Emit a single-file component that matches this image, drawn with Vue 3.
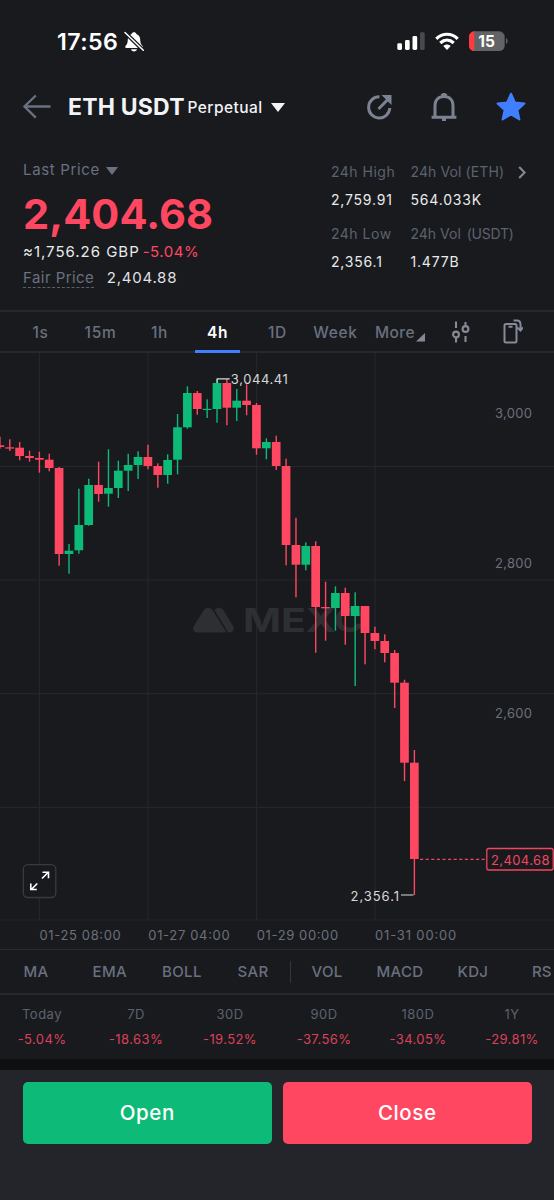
<script setup>
const UP = '#0eba78'
const DOWN = '#ff4761'

// [direction, high, body top, body bottom, low] in chart coordinates
const rows = [
  [0, 436.7, 445.3, 447, 448.7], [0, 439.3, 447.3, 448.6, 451], [0, 442, 447.7, 456, 460.3],
  [0, 450.7, 456, 458, 461.7], [0, 451.7, 458, 459.7, 472.7], [0, 453.7, 459.7, 468, 471.3],
  [0, 467, 468, 554, 565.7], [1, 544, 550.7, 554, 573.7], [1, 488.7, 525, 550.3, 553.7],
  [1, 478.7, 485, 525, 525.7], [0, 461.7, 485, 494, 501.7], [1, 449.3, 488, 493.7, 506.7],
  [1, 460.7, 470.7, 488, 498], [1, 453.7, 465, 470.7, 491], [1, 451.3, 457, 465, 479],
  [0, 444.7, 457, 466, 469.3], [0, 463.3, 466, 475, 487.7], [1, 454.3, 460, 475, 483.7],
  [1, 414, 427.3, 459.7, 474.3], [1, 386.3, 393, 427.3, 428.7], [0, 391, 393, 409, 414.7],
  [1, 399.3, 408.8, 410, 418], [1, 379, 383, 409, 422.7], [0, 379, 383, 407.7, 425.3],
  [1, 389, 400.7, 407.7, 421], [0, 384.3, 400.7, 405, 415.3], [0, 403, 405, 448.3, 454.7],
  [1, 438.3, 442, 448.3, 459.3], [0, 435.7, 442, 466, 470], [0, 458.7, 466, 545, 565.3],
  [0, 517.7, 545, 564.7, 597.3], [1, 542.3, 546, 564.7, 570.3], [0, 541.3, 546, 607, 652.7],
  [0, 581.7, 607, 608.3, 640.7], [1, 586.3, 593, 608, 630.7], [0, 587.7, 593, 616, 644.7],
  [1, 592.3, 606, 616, 686], [0, 606, 606, 633, 664.3], [0, 626.7, 633, 641, 649.3],
  [0, 634.3, 641, 653, 662.3], [0, 650, 653, 682.7, 708], [0, 679.7, 682.7, 762.7, 781],
  [0, 750, 762.7, 859, 895],
]
const candles = rows.map(([up, high, top, bottom, low], i) => ({
  x: -0.07 + i * 9.868, color: up ? UP : DOWN, high, top, bottom, low,
}))

const gridX = [39.4, 148, 256.6, 375]
const gridY = [466.5, 580, 693.6, 807.3]
const times = [
  { x: 39.5, label: '01-25 08:00' }, { x: 148.3, label: '01-27 04:00' },
  { x: 256.8, label: '01-29 00:00' }, { x: 375, label: '01-31 00:00' },
]
const prices = [{ y: 417.5, label: '3,000' }, { y: 567.5, label: '2,800' }, { y: 717.5, label: '2,600' }]

const tabs = ['1s', '15m', '1h', '4h', '1D', 'Week']
const overlays = ['MA', 'EMA', 'BOLL', 'SAR']
const oscillators = ['VOL', 'MACD', 'KDJ', 'RS']
const periods = [
  ['Today', '-5.04%'], ['7D', '-18.63%'], ['30D', '-19.52%'],
  ['90D', '-37.56%'], ['180D', '-34.05%'], ['1Y', '-29.81%'],
]
</script>

<template>
  <div class="screen">
    <header class="status">
      <span class="clock">17:56</span>
      <svg class="mute" width="20" height="22" viewBox="0 0 20 22">
        <path fill="#fff" d="M10 1.200c-1.200 0-2.100.7-2.400 1.700C5 3.800 3.900 6 3.800 8.500c-.1 3.500-.7 4.700-2.300 6.500-.6.8-.3 1.900.8 1.900h15.400c1.100 0 1.400-1.100.8-1.900-1.600-1.800-2.200-3-2.300-6.500-.1-2.500-1.200-4.700-3.800-5.600C12.100 1.900 11.200 1.200 10 1.200zM7 18.300h6c-.3 1.300-1.500 2.200-3 2.200s-2.700-.9-3-2.200z" />
        <path d="M1 1.500 19.500 19.500" stroke="#191a1e" stroke-width="4" />
        <path d="M1 1.500 19.300 19.300" stroke="#fff" stroke-width="1.500" stroke-linecap="round" />
      </svg>
      <svg class="signals" width="111" height="22" viewBox="0 0 111 22">
        <g fill="#fff">
          <rect x="0.300" y="12.300" width="4.700" height="6.700" rx="1.400" />
          <rect x="8" y="9" width="4.700" height="10" rx="1.400" />
          <rect x="15.500" y="5" width="4.700" height="14" rx="1.400" />
        </g>
        <rect x="23" y="1.300" width="4.700" height="17.700" rx="1.400" fill="#48494c" />
        <g fill="none" stroke="#fff" stroke-width="3.200">
          <path d="M39.300 7.800C45.500 1.700 54.500 1.700 60.700 7.800" />
          <path d="M43.300 12C47.300 8.200 52.700 8.200 56.700 12" />
        </g>
        <path fill="#fff" d="M46.300 14.900c2.200-2 5.200-2 7.400 0L50 18.900z" />
        <clipPath id="cell"><rect x="72" y="0.300" width="35.700" height="19.700" rx="5.500" /></clipPath>
        <g clip-path="url(#cell)">
          <rect x="72" y="0" width="36" height="20" fill="#626365" />
          <rect x="72" y="0" width="5.300" height="20" fill="#ff3b3f" />
        </g>
        <path d="M109 7v6c1-.4 1.600-1.500 1.600-3s-.6-2.600-1.600-3z" fill="#626365" />
        <text x="89.500" y="15.800" text-anchor="middle" class="battery">15</text>
      </svg>
    </header>

    <nav class="titlebar">
      <svg class="back" width="30" height="26" viewBox="0 0 30 26" fill="none" stroke="#697080" stroke-width="2.400">
        <path d="M28.500 12.500H2.500M13.800 1.500 2.500 12.500l11.300 11.200" />
      </svg>
      <h1>ETH USDT</h1>
      <span class="kind">Perpetual</span>
      <svg width="14" height="9" viewBox="0 0 14 9"><path d="M0 0h14L7 9z" fill="#f2f3f7" /></svg>
      <div class="actions">
        <svg width="26" height="28" viewBox="0 0 26 28" fill="none" stroke="#7b8291" stroke-width="3">
          <path d="M13.500 3.800A10.600 10.600 0 1 0 23.800 15" />
          <path d="M12.500 16 22 6.200" />
          <path d="M15.500 2H25.500V12L21.800 8.500 18.800 5.300z" fill="#7b8291" stroke="none" />
        </svg>
        <svg width="26" height="28" viewBox="0 0 26 28" fill="none" stroke="#7b8291" stroke-width="3">
          <path d="M4 24V12.500C4 7 7.500 3.500 13 3.500s9 3.500 9 9V24M0.600 24.200h24.800" />
          <path d="M10.500 2.800 13 1l2.500 1.800M11 26.500h4" />
        </svg>
        <svg width="30" height="30" viewBox="0 0 30 30">
          <path fill="#407fff" stroke="#407fff" stroke-width="2" stroke-linejoin="round" d="m15 1.700 3.900 8.700 9.500 1-7 6.500 2 9.500-8.400-4.900-8.400 4.900 2-9.500-7-6.500 9.500-1z" />
        </svg>
      </div>
    </nav>

    <section class="summary">
      <div class="quote">
        <div class="last">Last Price <svg width="12" height="8" viewBox="0 0 12 8"><path d="M0 0h12L6 8z" fill="#697080" /></svg></div>
        <div class="price">2,404.68</div>
        <div class="fiat">≈1,756.26 GBP<b>-5.04%</b></div>
        <div class="fair"><span>Fair Price</span><em>2,404.88</em></div>
      </div>
      <dl class="stats">
        <div><dt>24h High</dt><dd>2,759.91</dd></div>
        <div><dt class="vol">24h Vol (ETH)</dt><dd>564.033K</dd></div>
        <div><dt>24h Low</dt><dd>2,356.1</dd></div>
        <div><dt class="vol usdt">24h Vol <span>(USDT)</span></dt><dd>1.477B</dd></div>
      </dl>
      <svg class="chevron" width="8" height="13" viewBox="0 0 8 13"><path d="M1.200 1 6.600 6.500 1.200 12" fill="none" stroke="#858a96" stroke-width="2" /></svg>
    </section>

    <nav class="tabs">
      <span v-for="t in tabs" :key="t" class="tab" :class="[`t-${t}`, { active: t === '4h' }]">{{ t }}</span>
      <span class="tab more">More</span>
      <svg class="corner" width="9" height="9" viewBox="0 0 9 9"><path d="M9 0v8.500H0z" fill="#858a96" /></svg>
      <svg class="tune" width="18" height="22" viewBox="0 0 18 22" fill="none" stroke="#858a96" stroke-width="2.100">
        <path d="M4 0.500V7M4 16.500V21.500M13.500 1V4.500M13.500 15V21" />
        <circle cx="4" cy="13.500" r="2.900" /><circle cx="13.500" cy="8" r="2.900" />
      </svg>
      <svg class="rotate" width="20" height="25" viewBox="0 0 20 25" fill="none" stroke="#858a96" stroke-width="2">
        <rect x="1.500" y="5" width="12" height="18.500" rx="1.500" />
        <path d="M5.500 7.700h4M10.500 1.500h3.500q3.500 0 3.500 4v5.500M14.300 8.500l3.200 3 2.500-3" />
      </svg>
    </nav>

    <svg class="chart" width="554" height="596" viewBox="0 353 554 596">
      <g stroke="#24262b" stroke-width="1.200">
        <line v-for="x in gridX" :key="x" :x1="x" :x2="x" y1="353" y2="920" />
        <line v-for="y in gridY" :key="y" :y1="y" :y2="y" x1="0" x2="554" />
        <line x1="0" x2="554" y1="920" y2="920" stroke="#212328" />
      </g>
      <g class="watermark" fill="#2e2f33">
        <path d="M197.500 632.500c-4 0-5.500-3.500-3.300-7l9.300-15c2.300-3.600 7-3.600 9.300 0l13.700 22z" />
        <path d="M214.700 610.500c2-3.600 6.800-3.600 9 0l9 15c2.200 3.500.5 7-3.300 7h-1.200z" />
        <text x="243" y="632" textLength="121" lengthAdjust="spacingAndGlyphs">MEXC</text>
      </g>
      <g v-for="c in candles" :key="c.x" :fill="c.color">
        <rect :x="c.x - 0.7" :y="c.high" width="1.400" :height="c.low - c.high" />
        <rect :x="c.x - 4.400" :y="c.top" width="8.700" :height="c.bottom - c.top" />
      </g>
      <path d="M217.200 383v-4.200h12.500M401 895h12.500" fill="none" stroke="#d6d7da" stroke-width="1.200" />
      <g class="mark">
        <text x="230.800" y="384.300" textLength="57">3,044.41</text>
        <text x="350.500" y="900.800" textLength="48.500">2,356.1</text>
      </g>
      <g class="axis">
        <text v-for="p in prices" :key="p.y" x="495" :y="p.y" textLength="37">{{ p.label }}</text>
        <text v-for="t in times" :key="t.x" :x="t.x" y="939.500" textLength="81.300">{{ t.label }}</text>
      </g>
      <path d="M420 859.300h65" stroke="#e8455e" stroke-width="1.200" stroke-dasharray="3.200 2.400" />
      <rect x="486.800" y="848.500" width="66.400" height="21.500" rx="2" fill="#191a1e" stroke="#f0465f" stroke-width="1.300" />
      <text class="current" x="491" y="864.500" textLength="58.500">2,404.68</text>
      <rect x="23.300" y="864.700" width="32.500" height="32.800" rx="4.500" fill="#191a1e" stroke="#393b41" stroke-width="1.300" />
      <path d="M42 878.500l6-6M42.500 872.300h6v6M37.300 883.500l-6 6M30.800 883.500v6h6" fill="none" stroke="#fff" stroke-width="1.600" />
    </svg>

    <nav class="indicators">
      <span v-for="n in overlays" :key="n" :class="`i-${n}`">{{ n }}</span>
      <i></i>
      <span v-for="n in oscillators" :key="n" :class="`i-${n}`">{{ n }}</span>
    </nav>

    <section class="periods">
      <div v-for="p in periods" :key="p[0]"><span>{{ p[0] }}</span><b>{{ p[1] }}</b></div>
    </section>

    <footer class="trade">
      <button class="open">Open</button>
      <button class="close">Close</button>
    </footer>
  </div>
</template>

<style>
body { margin: 0; background: #191a1e; }
</style>

<style scoped>
* { box-sizing: border-box; }
.screen { width: 554px; height: 1200px; overflow: hidden; background: #191a1e; font-family: Inter, "Liberation Sans", sans-serif; color: #f2f3f7; display: flex; flex-direction: column; white-space: nowrap; }
.screen > * { flex: none; }
.status { height: 80px; display: flex; padding: 31px 0 0 57px; }
.clock { font-size: 23.200px; font-weight: 600; line-height: 22px; width: 67px; letter-spacing: 0.400px; color: #fff; }
.signals { margin-left: 253px; }
.battery { font-size: 15.500px; font-weight: 700; fill: #fff; }
.titlebar { height: 54px; display: flex; align-items: center; padding: 0 28px 0 22px; }
.back { margin-right: 16px; }
h1 { margin: 0; font-size: 23px; font-weight: 700; width: 119.500px; letter-spacing: 0.200px; }
.kind { font-size: 15.500px; font-weight: 450; width: 83.500px; letter-spacing: 0.450px; }
.actions { margin-left: auto; display: flex; align-items: center; gap: 39px; }
.summary { height: 176px; display: flex; padding-left: 23px; }
.quote { width: 308px; padding-top: 27px; }
.last { font-size: 15px; line-height: 18px; color: #697080; letter-spacing: 0.650px; }
.last svg { margin-left: 1px; }
.price { font-size: 41.500px; font-weight: 700; line-height: 44px; margin-top: 13px; color: #ff4761; letter-spacing: 0.100px; }
.fiat { font-size: 15px; line-height: 18px; margin-top: 7px; letter-spacing: 0.980px; color: #e9eaec; }
.fiat b { font-weight: 400; color: #ff4761; margin-left: 3px; letter-spacing: 0.500px; }
.fair { font-size: 15px; line-height: 18px; margin-top: 8px; letter-spacing: 0.450px; display: flex; color: #697080; }
.fair span { border-bottom: 1.500px dashed #5b606c; height: 19px; }
.fair em { font-style: normal; color: #e0e1e4; margin-left: 12.500px; letter-spacing: 0.750px; }
.stats { margin: 29px 0 0; display: grid; grid-template-columns: 79.500px 107.500px; grid-auto-rows: 62px; font-size: 14px; letter-spacing: 0.500px; }
dt { color: #5c626e; line-height: 18px; }
dd { margin: 10px 0 0; line-height: 17px; color: #e9eaec; letter-spacing: 0.800px; }
.vol { letter-spacing: 0.100px; }
.usdt { letter-spacing: 0; }
.usdt span { margin-left: 2px; letter-spacing: -0.250px; }
.chevron { margin-top: 32px; }
.tabs { height: 43px; border-top: 2px solid #26282d; border-bottom: 2px solid #26282d; display: flex; align-items: center; font-size: 15.500px; font-weight: 450; letter-spacing: 0.700px; color: #697080; }
.tab { height: 43px; line-height: 46px; width: 45px; text-align: center; }
.t-1s { margin-left: 18px; }
.t-15m { margin-left: 15px; }
.t-1h { margin-left: 14px; }
.t-4h { margin-left: 13px; }
.t-1D { margin-left: 15px; }
.t-Week { margin-left: 13px; }
.active { color: #fff; font-weight: 600; border-bottom: 3px solid #407fff; }
.more { margin-left: 17px; text-align: left; width: 41px; letter-spacing: 0.400px; }
.corner { margin-top: 11px; }
.tune { margin-left: 27px; }
.rotate { margin-left: 33px; margin-top: -1px; }
.chart { display: block; }
.watermark text { font-size: 33px; font-weight: 700; }
.mark text { font-size: 13px; fill: #d6d7da; }
.axis text { font-size: 13px; fill: #6b707b; }
.current { font-size: 13px; fill: #f0465f; }
.indicators { height: 46px; border-top: 1px solid #2b2d33; border-bottom: 2px solid #26282d; display: flex; align-items: center; padding-left: 23.500px; font-size: 15px; font-weight: 450; letter-spacing: 0.350px; color: #697080; }
.indicators span { flex: none; }
.indicators i { width: 1px; height: 22px; background: #34363c; margin: 0 20.500px 0 0; flex: none; }
.i-MA { width: 69px; }
.i-EMA { width: 69.500px; }
.i-BOLL { width: 75.500px; }
.i-SAR { width: 52.500px; }
.i-VOL { width: 65px; }
.i-MACD { width: 81px; }
.i-KDJ { width: 74.500px; }
.i-RS { letter-spacing: 0; }
.periods { height: 64px; display: grid; grid-template-columns: repeat(6, 94px); margin-left: -5px; padding-top: 10px; text-align: center; font-size: 13px; letter-spacing: 0.500px; color: #5c626e; }
.periods span { display: block; line-height: 18px; }
.periods b { display: block; line-height: 17px; margin-top: 8px; font-weight: 400; letter-spacing: 0.400px; color: #dc415a; }
.trade { flex: 1; border-top: 11px solid #0e1011; background: #24252a; display: flex; gap: 11.500px; padding: 11.500px 22.500px 0 23px; }
.trade button { flex: 1; height: 62px; border: 0; border-radius: 5px; font: 500 20.500px Inter, sans-serif; letter-spacing: 0.600px; color: #fff; padding: 0; }
.open { background: #0eba78; }
.close { background: #ff4761; }
</style>
